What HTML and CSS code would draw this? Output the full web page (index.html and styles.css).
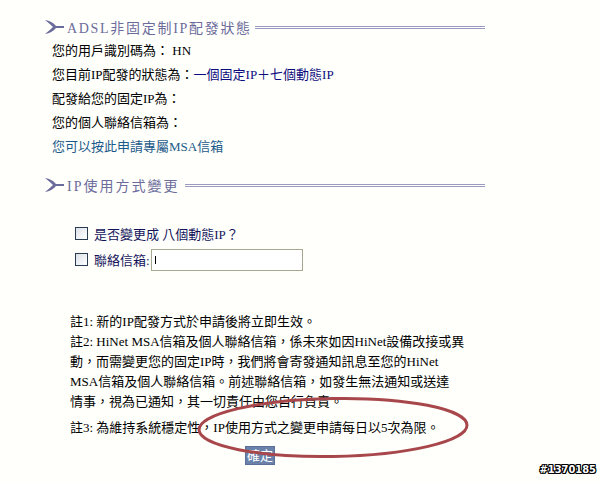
FILE: index.html
```html
<!doctype html>
<html>
<head>
<meta charset="utf-8">
<title>IP配發狀態</title>
<link rel="stylesheet" href="styles.css">
</head>
<body>
<div class="page">
	<div class="sect-title">
		<svg class="arrow" width="19" height="16" viewBox="0 0 19 16"><path d="M0 1 Q7 2 11 7 L19 7 L19 9 L11 9 Q7 14 0 15 Q5 11 8 8 Q5 5 0 1 Z" fill="#6c6c9c"/></svg>
		<span class="title-txt t1">ADSL非固定制IP配發狀態</span>
		<span class="dbl-line"></span>
	</div>
	<ul class="info">
		<li>您的用戶識別碼為： HN</li>
		<li>您目前IP配發的狀態為：<span class="navy">一個固定IP＋七個動態IP</span></li>
		<li>配發給您的固定IP為：</li>
		<li>您的個人聯絡信箱為：</li>
		<li><a href="javascript:;" class="link">您可以按此申請專屬MSA信箱</a></li>
	</ul>
	<div class="sect-title sect2">
		<svg class="arrow" width="19" height="16" viewBox="0 0 19 16"><path d="M0 1 Q7 2 11 7 L19 7 L19 9 L11 9 Q7 14 0 15 Q5 11 8 8 Q5 5 0 1 Z" fill="#6c6c9c"/></svg>
		<span class="title-txt">IP使用方式變更</span>
		<span class="dbl-line"></span>
	</div>
	<div class="opts">
		<div class="opt"><span class="cbox"></span><span class="opt-txt">是否變更成 八個動態IP？</span></div>
		<div class="opt opt2"><span class="cbox"></span><span class="opt-txt">聯絡信箱:</span><span class="field"><span class="caret"></span></span></div>
	</div>
	<div class="notes">
		<p>註1: 新的IP配發方式於申請後將立即生效。</p>
		<p>註2: HiNet MSA信箱及個人聯絡信箱，係未來如因HiNet設備改接或異<br>動，而需變更您的固定IP時，我們將會寄發通知訊息至您的HiNet<br>MSA信箱及個人聯絡信箱。前述聯絡信箱，如發生無法通知或送達<br>情事，視為已通知，其一切責任由您自行負責。</p>
		<p class="n3">註3: 為維持系統穩定性，IP使用方式之變更申請每日以5次為限。</p>
		<div class="btn-row"><a href="javascript:;" class="btn">確定</a></div>
	</div>
	<svg class="mark" width="282" height="72" viewBox="0 0 282 72"><ellipse cx="140" cy="34.5" rx="134" ry="29" transform="rotate(-1 140 34.5)" fill="none" stroke="#a8474b" stroke-width="3"/></svg>
	<div class="stamp">#1370185</div>
</div>
</body>
</html>
```
FILE: styles.css
```css
*{margin:0; padding:0; list-style:none; text-decoration:none;}
body{background:#fffffb; font-family:"Liberation Serif","Noto Sans CJK TC",serif; font-size:13px; color:#000;}
.page{position:relative; width:601px; height:482px; overflow:hidden;}
.sect-title{display:flex; align-items:center; height:20px; margin:17px 0 0 45px; width:440px;}
.sect2{margin-top:16px;}
.arrow{flex:none; display:block;}
.title-txt{color:#6c6c9c; font-size:14px; letter-spacing:2px; margin:0 6px 0 3px; white-space:nowrap;}
.t1{letter-spacing:1.7px; margin-right:3px;}
.dbl-line{flex:1; height:1px; border-top:1px solid #9c9cc0; border-bottom:1px solid #9c9cc0;}
.info{margin:2px 0 0 52px;}
.info li{line-height:24px; height:24px;}
.navy{color:#0c0c80;}
.link{color:#1c5a8a;}
.opts{margin:25px 0 0 75px;}
.opt{display:flex; align-items:center; height:26px; color:#14145c;}
.opt2{height:27px;}
.cbox{width:11px; height:11px; border:1px solid #2a3c50; background:linear-gradient(135deg,#dde2e8,#fff); margin-right:6px;}
.opt-txt{font-size:13px;}
.field{display:block; width:150px; height:20px; border:1px solid #a8a890; background:#fff; margin-left:1px; position:relative;}
.caret{position:absolute; left:3px; top:6px; width:1px; height:8px; background:#000;}
.notes{margin:39px 0 0 70px; width:380px;}
.notes p{line-height:20px; white-space:nowrap;}
.notes .n3{margin-top:6px;}
.btn-row{text-align:center; margin-top:8px;}
.btn{display:inline-block; background:#6a82aa; color:#fff; padding:0 1px; height:17px; line-height:17px; font-size:13px; border:1px solid #5a7098;}
.mark{position:absolute; left:193px; top:393px;}
.stamp{position:absolute; right:5px; bottom:6px; color:#fff; font:bold 11px "DejaVu Sans Condensed","DejaVu Sans",sans-serif; text-shadow:1px 0 #000,-1px 0 #000,0 1px #000,0 -1px #000,1px 1px #000,-1px -1px #000,1px -1px #000,-1px 1px #000;}
```
